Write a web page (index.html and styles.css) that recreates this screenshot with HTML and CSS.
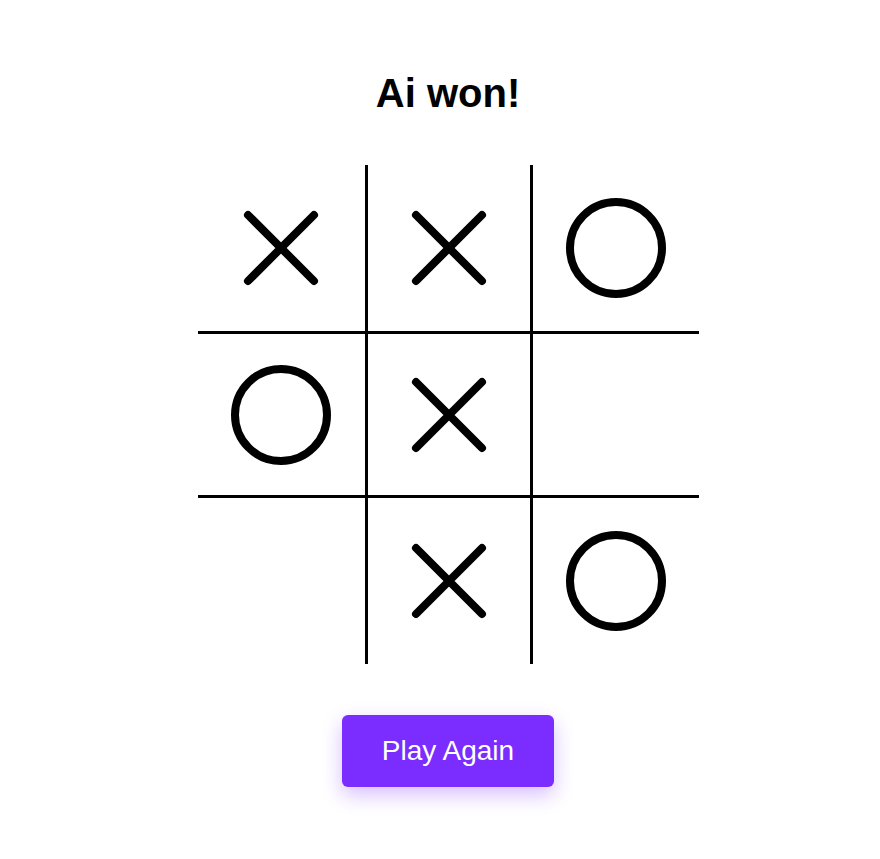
FILE: index.html
```html
<!DOCTYPE html>
<html lang="en">
<head>
<meta charset="utf-8">
<title>Tic Tac Toe</title>
<link rel="stylesheet" href="styles.css">
</head>
<body>
<main class="app">
  <h1 class="status">Ai won!</h1>
  <div class="board">
    <div class="cell">
      <svg class="mark" viewBox="0 0 100 100"><path d="M17 17 L83 83 M83 17 L17 83"/></svg>
    </div>
    <div class="cell col-mid">
      <svg class="mark" viewBox="0 0 100 100"><path d="M17 17 L83 83 M83 17 L17 83"/></svg>
    </div>
    <div class="cell">
      <svg class="mark" viewBox="0 0 100 100"><circle cx="50" cy="50" r="46"/></svg>
    </div>
    <div class="cell row-mid">
      <svg class="mark" viewBox="0 0 100 100"><circle cx="50" cy="50" r="46"/></svg>
    </div>
    <div class="cell row-mid col-mid">
      <svg class="mark" viewBox="0 0 100 100"><path d="M17 17 L83 83 M83 17 L17 83"/></svg>
    </div>
    <div class="cell row-mid"></div>
    <div class="cell"></div>
    <div class="cell col-mid">
      <svg class="mark" viewBox="0 0 100 100"><path d="M17 17 L83 83 M83 17 L17 83"/></svg>
    </div>
    <div class="cell">
      <svg class="mark" viewBox="0 0 100 100"><circle cx="50" cy="50" r="46"/></svg>
    </div>
  </div>
  <button class="play-again" type="button">Play Again</button>
</main>
</body>
</html>
```

FILE: styles.css
```css
* {
  box-sizing: border-box;
}

html, body {
  margin: 0;
  padding: 0;
  background: #ffffff;
}

body {
  font-family: "Liberation Sans", Arial, sans-serif;
  color: #000000;
}

.app {
  display: flex;
  flex-direction: column;
  align-items: center;
  padding: 70px 0 40px 16px;
}

.status {
  margin: 0;
  font-size: 40px;
  line-height: 46px;
  font-weight: 700;
}

.board {
  margin-top: 49px;
  display: grid;
  grid-template-columns: 167px 168px 166px;
  grid-template-rows: 166px 167px 166px;
}

.cell {
  display: flex;
  align-items: center;
  justify-content: center;
}

.col-mid {
  border-left: 3px solid #000;
  border-right: 3px solid #000;
}

.row-mid {
  border-top: 3px solid #000;
  border-bottom: 3px solid #000;
}

.mark {
  width: 100px;
  height: 100px;
  fill: none;
  stroke: #000;
  stroke-width: 8;
  stroke-linecap: round;
}

.play-again {
  margin-top: 51px;
  padding: 0 40px;
  height: 72px;
  border: none;
  border-radius: 6px;
  background: #7b2cff;
  color: #ffffff;
  font-family: "Liberation Sans", Arial, sans-serif;
  font-size: 28px;
  cursor: pointer;
  box-shadow: 0 8px 20px rgba(123, 44, 255, 0.3);
}
```
